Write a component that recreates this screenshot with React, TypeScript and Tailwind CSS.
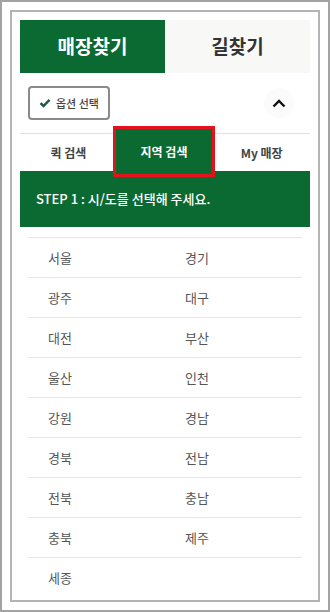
import React from "react";

const regions = [
  ["서울", "경기"],
  ["광주", "대구"],
  ["대전", "부산"],
  ["울산", "인천"],
  ["강원", "경남"],
  ["경북", "전남"],
  ["전북", "충남"],
  ["충북", "제주"],
  ["세종", ""],
];

const font = { fontFamily: '"Noto Sans CJK KR", "Noto Sans", sans-serif' };

export default function App() {
  return (
    <div className="w-[330px] h-[612px] bg-white border-2 border-[#a3a3a3] p-2" style={font}>
      <div className="h-full border-2 border-[#b4b4b4] px-[8px] pt-[8px]">
        {/* top tabs */}
        <div className="flex h-[53px]">
          <div className="w-[145px] bg-[#0b6a31] flex items-center justify-center text-white text-[19px] font-bold">
            매장찾기
          </div>
          <div className="flex-1 bg-[#f8f8f6] flex items-center justify-center text-[#333] text-[19px] font-bold">
            길찾기
          </div>
        </div>

        {/* option row */}
        <div className="flex items-center justify-between h-[60px] pl-[8px] pr-[16px]">
          <button className="flex items-center gap-[5px] h-[34px] px-[9px] border-2 border-[#8a8a8a] rounded-[4px] text-[11px] text-[#444] font-medium">
            <svg width="12" height="10" viewBox="0 0 12 10">
              <path d="M1.5 5.2 L4.5 8 L10.5 1.8" fill="none" stroke="#1d5a46" strokeWidth="2.4" />
            </svg>
            옵션 선택
          </button>
          <div className="w-[30px] h-[30px] rounded-full bg-[#fbfbfb] flex items-center justify-center">
            <svg width="14" height="9" viewBox="0 0 14 9">
              <path d="M1.5 7.5 L7 2 L12.5 7.5" fill="none" stroke="#111" strokeWidth="2.4" />
            </svg>
          </div>
        </div>

        {/* search tabs */}
        <div className="border-t border-[#e2e2e2] grid grid-cols-3 h-[38px] text-[12px] font-bold">
          <div className="flex items-center justify-center text-[#444]">퀵 검색</div>
          <div className="relative flex items-center justify-center">
            <div className="absolute -left-[4px] -right-[2px] -top-[8px] -bottom-[6px] bg-[#0b6a31] border-[3px] border-[#e3121b] z-10 flex items-center justify-center text-white">
              지역 검색
            </div>
          </div>
          <div className="flex items-center justify-center text-[#444] font-semibold">My 매장</div>
        </div>

        {/* step banner */}
        <div className="h-[56px] bg-[#0b6a31] flex items-center pl-[16px] text-white text-[13px] font-medium">
          STEP 1 : 시/도를 선택해 주세요.
        </div>

        {/* region list */}
        <div className="mt-[10px] mx-[8px]">
          {regions.map((row, i) => (
            <div
              key={i}
              className={`grid grid-cols-2 h-[40px] items-center text-[13px] text-[#555] ${
                i < regions.length ? "border-t border-[#e6e6e6]" : ""
              }`}
            >
              <span className="pl-[20px]">{row[0]}</span>
              <span className="pl-[20px]">{row[1]}</span>
            </div>
          ))}
        </div>
      </div>
    </div>
  );
}
